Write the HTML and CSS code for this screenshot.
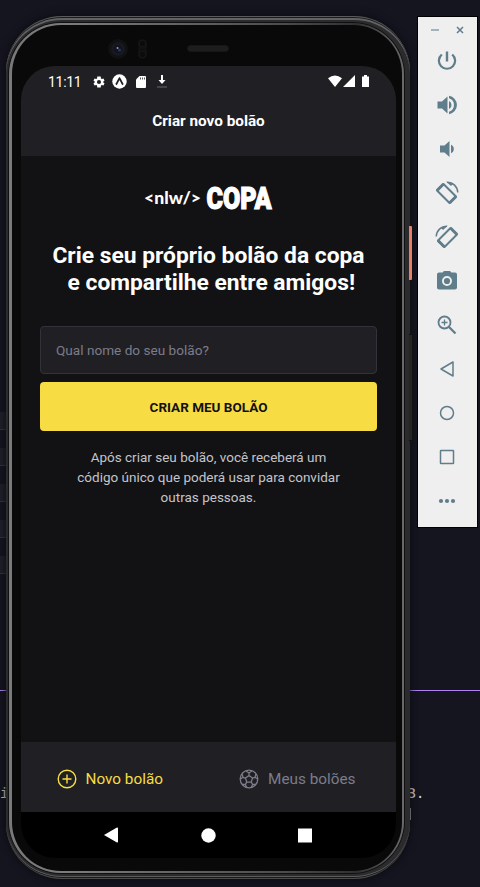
FILE: index.html
```html
<!DOCTYPE html>
<html lang="pt-BR">
<head>
<meta charset="utf-8">
<title>Criar novo bolão</title>
<link rel="stylesheet" href="styles.css">
</head>
<body>
<div class="desktop">
  <div class="editor-rule"></div>
  <span class="editor-text editor-i">i</span>
  <span class="editor-text editor-b">B.</span>
  <i class="cursor"></i>
  <div class="keys"><i></i><i></i><i></i><i></i><i></i></div>
  <i class="side-button power"></i>
  <i class="side-button volume"></i>

  <div class="phone">
    <div class="rim">
    <div class="bezel">
      <div class="sensors">
        <svg width="130" height="28" viewBox="0 0 130 28">
          <circle cx="13" cy="14" r="10" fill="#111113"/>
          <circle cx="13" cy="14" r="7" fill="#18191c"/>
          <circle cx="13" cy="14" r="4" fill="#101422"/>
          <circle cx="14.5" cy="15" r="1.6" fill="#2c3160"/>
          <circle cx="12.5" cy="13" r="1" fill="#989bac"/>
          <rect x="33" y="4" width="9" height="20" rx="4.5" fill="#101011"/>
          <circle cx="37.5" cy="8.5" r="3.4" fill="#0b0b0c" stroke="#19191a"/>
          <circle cx="37.5" cy="19.5" r="3.4" fill="#0b0b0c" stroke="#19191a"/>
          <rect x="82.500" y="10.500" width="41" height="6" rx="3" fill="#1d1d1e" stroke="#171718"/>
        </svg>
      </div>
      <main class="screen">
        <header class="header">
          <div class="status">
            <span class="clock">11:11</span>
            <svg class="gear" width="14" height="14" viewBox="0 0 24 24"><path fill="#fff" fill-rule="evenodd" d="M19.4 13c.1-.7.1-1.300 0-2l2.100-1.600-2-3.500-2.500 1a7 7 0 0 0-1.700-1L15 2.500H9l-.3 3.400a7 7 0 0 0-1.700 1l-2.500-1-2 3.500L4.600 11a8 8 0 0 0 0 2l-2.100 1.600 2 3.500 2.500-1c.5.400 1.100.700 1.700 1l.3 3.400h6l.3-3.400c.6-.3 1.200-.6 1.700-1l2.500 1 2-3.500zM12 8.500a3.500 3.500 0 1 0 0 7 3.500 3.500 0 0 0 0-7z"/></svg>
            <svg class="expo" width="15" height="15" viewBox="0 0 15 15"><circle cx="7.500" cy="7.500" r="7.200" fill="#fff"/><path d="M4 10.600C5.300 9 6 6.400 7.500 4.400 9 6.400 9.700 9 11 10.600" fill="none" stroke="#202024" stroke-width="1.800"/></svg>
            <svg class="sd" width="10" height="12" viewBox="0 0 10 12"><path fill="#fff" d="M3.500 0H9q1 0 1 1v10q0 1-1 1H1q-1 0-1-1V3.500z"/><path d="M4.500 1.500v2M6.500 1.500v2M8.500 1.500v2" stroke="#555559"/></svg>
            <svg class="down" width="10" height="13" viewBox="0 0 10 13"><path fill="#fff" d="M4 0h2v5h2.500L5 9 1.500 5H4z"/><path d="M0 12h10" stroke="#69696d"/></svg>
            <svg class="signals" width="42" height="13" viewBox="0 0 42 13"><path fill="#fff" d="M0 3.300Q7-2.300 14 3.300L7 12zM15 12 27 0v12zM34 1.500h2V0h3v1.500h2V12h-7z"/></svg>
          </div>
          <h1>Criar novo bolão</h1>
        </header>
        <section class="content">
          <svg class="logo" width="134" height="44" viewBox="0 -8 134 44">
            <text class="nlw" x="2" y="18.500" textLength="57" lengthAdjust="spacingAndGlyphs">&lt;nlw/&gt;</text>
            <text class="copa" x="64.500" y="23.800" textLength="65" lengthAdjust="spacingAndGlyphs">COPA</text>
          </svg>
          <h2>Crie seu próprio bolão da copa <br>&nbsp;e compartilhe entre amigos!</h2>
          <input type="text" placeholder="Qual nome do seu bolão?" aria-label="Nome do bolão">
          <button>CRIAR MEU BOLÃO</button>
          <p>Após criar seu bolão, você receberá um<br>código único que poderá usar para convidar<br>outras pessoas.</p>
        </section>
        <nav class="tabs">
          <a class="tab active">
            <svg width="20" height="20" viewBox="0 0 20 20" fill="none" stroke="currentColor" stroke-width="1.400"><circle cx="10" cy="10" r="8.800"/><path d="M5.500 10h9M10 5.500v9"/></svg>
            <span>Novo bolão</span>
          </a>
          <a class="tab">
            <svg width="20" height="20" viewBox="0 0 20 20" fill="none" stroke="currentColor" stroke-width="1.300" stroke-linejoin="round"><circle cx="10" cy="10" r="8.800"/><path d="M10 6.500l3.500 2.600-1.300 4.100H7.800L6.500 9.100zM10 6.500V4M6.500 9.100 4 8.300M13.500 9.100 16 8.300M7.800 13.200l-1.500 2.100M12.200 13.200l1.500 2.100M6.800 1.800 10 4l3.200-2.200M1.200 10.300 4 8.300 2.900 4.700M18.800 10.300 16 8.300l1.100-3.600M3 15.300h3.300l1.300 3.200M17 15.300h-3.300l-1.300 3.200"/></svg>
            <span>Meus bolões</span>
          </a>
        </nav>
        <div class="android-nav">
          <svg width="15" height="16" viewBox="0 0 15 16"><path fill="#fff" d="M0 8 12.500.800Q14 0 14 1.500v13q0 1.500-1.500.700z"/></svg>
          <svg width="15" height="15" viewBox="0 0 15 15"><circle cx="7.500" cy="7.500" r="7.200" fill="#fff"/></svg>
          <svg width="14" height="15" viewBox="0 0 14 15"><path fill="#fff" d="M0 .5h14v14H0z"/></svg>
        </div>
      </main>
    </div>
    </div>
  </div>

  <aside class="toolbar">
    <div class="window-buttons">
      <svg width="8" height="8" viewBox="0 0 8 8"><path d="M0 4h8" stroke="#a4b4bb" stroke-width="2"/></svg>
      <svg width="8" height="8" viewBox="0 0 8 8"><path d="M1 1l6 6M7 1 1 7" stroke="#607d8b" stroke-width="1.500"/></svg>
    </div>
    <svg viewBox="0 0 24 24"><path fill="currentColor" d="M13.200 2.500h-2.400v10h2.400zm4.800 2.200-1.600 1.600A7 7 0 1 1 7.600 6.300L6 4.700a9.200 9.200 0 1 0 12 0z"/></svg>
    <svg viewBox="0 0 24 24"><path fill="currentColor" d="M2.500 8.500v7h4.500l5.500 5V3.500L7 8.500zm14 3.500A4.500 4.500 0 0 0 14 8v8c1.500-.7 2.500-2.200 2.500-4zM14 2.800v2.500a7 7 0 0 1 0 13.400v2.500a9.300 9.300 0 0 0 0-18.400z"/></svg>
    <svg viewBox="0 0 24 24"><path fill="currentColor" d="M5 8.500v7h4.500l5 4.500V4l-5 4.500zm13.800 3.500A4.500 4.500 0 0 0 16 7.700v8.600c1.700-.7 2.800-2.300 2.800-4.300z"/></svg>
    <svg viewBox="0 0 24 24" fill="none" stroke="currentColor"><path stroke-width="2" stroke-linejoin="round" d="M8.500 3 21 15.500 14.500 22 2 9.500z"/><path stroke-width="3" d="M8.500 3 2 9.500M21 15.500 14.500 22"/><path stroke-width="1.500" d="M12 1.200c6 0 10.500 4.300 10.800 10.300"/><path fill="currentColor" stroke="none" d="M11 .5 16 5l2-2.200z"/></svg>
    <svg viewBox="0 0 24 24" fill="none" stroke="currentColor"><path stroke-width="2" stroke-linejoin="round" d="M15.500 3 3 15.500 9.500 22 22 9.500z"/><path stroke-width="3" d="M15.500 3 22 9.500M3 15.500 9.500 22"/><path stroke-width="1.500" d="M12 1.200C6 1.200 1.500 5.500 1.200 11.500"/><path fill="currentColor" stroke="none" d="M13 .5 8 5 6 2.800z"/></svg>
    <svg viewBox="0 0 24 24"><path fill="currentColor" fill-rule="evenodd" d="M9 2 7.500 3.500H4a2 2 0 0 0-2 2v13c0 1.100.9 2 2 2h16a2 2 0 0 0 2-2v-13a2 2 0 0 0-2-2h-3.500L15 2zm3 5a5 5 0 1 1 0 10 5 5 0 0 1 0-10z"/><circle cx="12" cy="12" r="3.100" fill="currentColor"/></svg>
    <svg viewBox="0 0 24 24" fill="none" stroke="currentColor"><circle cx="9.500" cy="9.500" r="6" stroke-width="1.800"/><path stroke-width="2.300" d="m14 14 6.500 6.500"/><path stroke-width="1.300" d="M6.500 9.500h6M9.500 6.500v6"/></svg>
    <svg viewBox="0 0 24 24" fill="none" stroke="currentColor"><path stroke-width="1.500" stroke-linejoin="round" d="M18 5v14L6 12z"/></svg>
    <svg viewBox="0 0 24 24" fill="none" stroke="currentColor"><circle cx="12" cy="12" r="6.500" stroke-width="1.500"/></svg>
    <svg viewBox="0 0 24 24" fill="none" stroke="currentColor"><rect x="5.500" y="5.500" width="13" height="13" rx=".5" stroke-width="1.500"/></svg>
    <svg viewBox="0 0 24 24" fill="currentColor"><circle cx="6" cy="12" r="2.100"/><circle cx="12" cy="12" r="2.100"/><circle cx="18" cy="12" r="2.100"/></svg>
  </aside>
</div>
</body>
</html>
```
FILE: styles.css
```css
* { box-sizing: border-box; }
body { margin: 0; font-family: Roboto, sans-serif; }
svg { display: block; flex: none; }

.desktop {
  position: relative;
  width: 480px;
  height: 887px;
  overflow: hidden;
  background: #151520;
}

/* Windows behind the emulator */
.editor-rule { position: absolute; top: 690px; left: 0; width: 100%; height: 1px; background: #b083f0; }
.editor-text { position: absolute; top: 784px; font: 14.500px/18px "DejaVu Sans Mono", monospace; color: #d0d0d0; }
.editor-i { left: 0; }
.editor-b { left: 407px; }
.cursor { position: absolute; left: 410px; top: 808px; width: 1px; height: 12px; background: #aaa; }
.keys { position: absolute; left: 0; top: 412px; width: 8px; display: grid; gap: 18px; }
.keys i { height: 18px; background: #20202a; border-bottom: 1px solid #34343d; }
.side-button { position: absolute; border-radius: 0 1px 1px 0; z-index: 1; }
.power { top: 226px; left: 409px; width: 3px; height: 54px; background: #e67f65; }
.volume { top: 334px; left: 409px; width: 4px; height: 107px; background: #252526; border: 1px solid #111; border-left: 0; }

/* Device frame */
.phone {
  position: absolute;
  left: 6px;
  top: 16px;
  width: 404px;
  height: 863px;
  border-radius: 56px;
  padding: 6px 6px 5px 3px;
  background: #2b2b2d;
  border-top: 1px solid #5a5a5a;
  border-bottom: 1px solid #4a4a4a;
  box-shadow: 0 0 9px #0a0a10, inset 0 1px 0 #1a1a1a, inset 0 3px 0 #606264, inset 0 -1px 0 #1a1a1a, inset 0 -2px 0 #5c5c5c;
}
.rim {
  height: 850px;
  border-radius: 52px;
  padding: 2px 2px 2px 3px;
  background: linear-gradient(90deg, #78797b 0, #7c7c7c 15%, #4c4c4c 70%, #303032 88%, #6a6a6c 100%);
  box-shadow: 0 0 0 1px #101011;
}
.bezel {
  position: relative;
  height: 846px;
  border-radius: 49px;
  padding: 41px 6px 13px 9px;
  background: #090909;
}
.sensors { position: absolute; left: 93px; top: 10px; }

.screen {
  display: flex;
  flex-direction: column;
  width: 375px;
  height: 792px;
  border-radius: 34px;
  overflow: hidden;
  background: #121214;
  color: #fff;
}
.header { height: 90px; background: #202024; }
.status { display: flex; align-items: center; height: 30px; padding: 1px 26px 0 27px; }
.clock { width: 44px; font-size: 14px; letter-spacing: -.3px; }
.expo { margin-left: 6px; }
.sd { margin-left: 9px; }
.down { margin-left: 11px; }
.signals { margin-left: auto; }
h1 { margin: 15px 0 0; text-align: center; font-size: 15.300px; line-height: 21px; font-weight: 700; }

.content { flex: 1; padding: 21px 19px 0; }
.logo { margin: 0 auto; overflow: visible; }
.nlw { font: 900 17px Lato, sans-serif; fill: #fff; }
.copa { font: 900 31px Roboto, sans-serif; fill: #fff; stroke: #fff; stroke-width: 1.200px; }
h2 { margin: 21px 0 0; text-align: center; font-size: 22.800px; line-height: 27px; font-weight: 700; white-space: nowrap; }
input {
  display: block;
  width: 337px;
  height: 48px;
  margin-top: 30px;
  padding: 0 15px;
  border: 1px solid #323238;
  border-radius: 4px;
  background: #202024;
  font: 13.600px Roboto, sans-serif;
  color: #fff;
}
input::placeholder { color: #7c7c8a; opacity: 1; }
button {
  display: block;
  width: 337px;
  height: 49px;
  margin-top: 8px;
  padding: 1px 0 0;
  border: 0;
  border-radius: 4px;
  background: #f7dd43;
  font: 700 13.500px Roboto, sans-serif;
  color: #121214;
}
p { margin: 16px 0 0; text-align: center; font-size: 13.500px; line-height: 20px; color: #c4c4cc; white-space: nowrap; }

.tabs { display: grid; grid-template-columns: 1fr 1fr; height: 70px; background: #202024; }
.tab { display: flex; align-items: center; justify-content: center; gap: 9px; padding: 3px 10px 0 0; font-size: 15.300px; color: #7c7c8a; }
.tab.active { color: #f7dd43; }
.android-nav { display: flex; align-items: center; justify-content: space-between; height: 46px; padding: 0 84px 0 83px; background: #000; }

/* Emulator controls */
.toolbar {
  position: absolute;
  left: 417px;
  top: 16px;
  width: 61px;
  height: 512px;
  display: flex;
  flex-direction: column;
  align-items: center;
  gap: 20px;
  padding-right: 1px;
  border: 1px solid #000;
  background: #efefef;
  color: #607d8b;
}
.toolbar > svg { width: 24px; height: 24px; }
.window-buttons { display: flex; gap: 17px; height: 12px; margin: 9px 0 -9px 1px; }
```
